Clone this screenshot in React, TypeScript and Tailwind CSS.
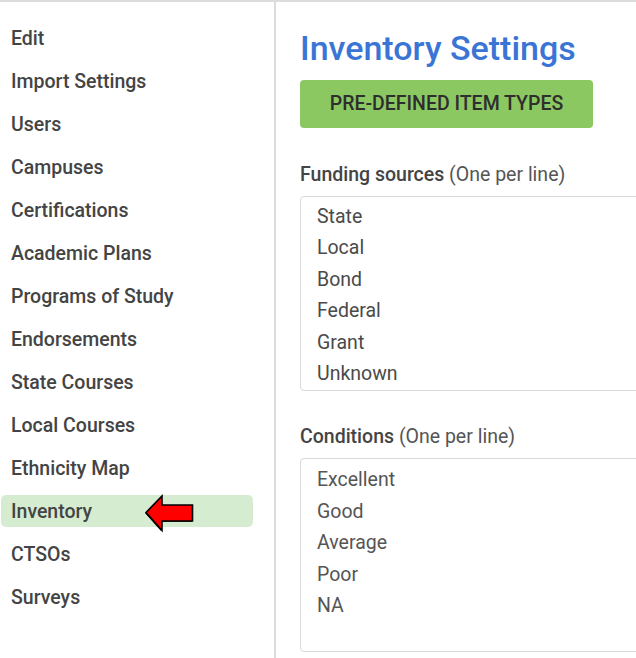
import React from "react";

const items = [
  "Edit",
  "Import Settings",
  "Users",
  "Campuses",
  "Certifications",
  "Academic Plans",
  "Programs of Study",
  "Endorsements",
  "State Courses",
  "Local Courses",
  "Ethnicity Map",
  "Inventory",
  "CTSOs",
  "Surveys",
];

const funding = ["State", "Local", "Bond", "Federal", "Grant", "Unknown"];
const conditions = ["Excellent", "Good", "Average", "Poor", "NA"];

function Arrow() {
  return (
    <svg
      className="absolute left-[142px] top-[-2px] overflow-visible"
      width="52"
      height="40"
      viewBox="0 0 52 40"
    >
      <polygon
        points="3,19.5 19,3 19,12 49.5,12 49.5,28 19,28 19,37.5"
        fill="#000"
        transform="translate(-0.8,0.8)"
      />
      <polygon
        points="3,19.5 19,3 19,12 49.5,12 49.5,28 19,28 19,37.5"
        fill="#ff0000"
        stroke="#000"
        strokeWidth="1.6"
        strokeLinejoin="miter"
      />
    </svg>
  );
}

export default function App() {
  return (
    <div
      className="w-[636px] h-[658px] overflow-hidden bg-white border-t-2 border-[#dcdcdc] flex"
      style={{ fontFamily: "Roboto, 'Noto Sans', sans-serif" }}
    >
      <div className="w-[276px] shrink-0 border-r-2 border-[#dcdcdc] pl-[1px] pr-[21px] pt-[20px] flex flex-col gap-[11px]">
        {items.map((it) => (
          <div
            key={it}
            className={
              "relative h-[32px] flex items-center pl-[10px] pt-[2px] rounded-[5px] text-[19.5px] font-medium text-[#444] whitespace-nowrap " +
              (it === "Inventory" ? "bg-[#d5ecd0]" : "")
            }
          >
            {it}
            {it === "Inventory" && <Arrow />}
          </div>
        ))}
      </div>
      <div className="flex-1 pl-[24px] flex flex-col min-w-0">
        <h1 className="mt-[28px] text-[34px] leading-[36px] text-[#3a75d6] font-medium whitespace-nowrap">
          Inventory Settings
        </h1>
        <div className="mt-[14px] w-[293px] h-[48px] shrink-0 rounded-[4px] bg-[#8bc862] flex items-center justify-center text-[19.5px] font-medium text-[#2e2e2e] whitespace-nowrap">
          PRE-DEFINED ITEM TYPES
        </div>
        <div className="mt-[35px] text-[19.5px] leading-[24px] text-[#444] whitespace-nowrap">
          <span className="font-medium">Funding sources</span>{" "}
          <span className="text-[#555]">(One per line)</span>
        </div>
        <div className="mt-[9px] w-[380px] h-[195px] shrink-0 border border-[#d9d9d9] rounded-[4px] pl-[16px] pt-[4px] text-[19.5px] leading-[31.4px] text-[#4a4a4a]">
          {funding.map((f) => (
            <div key={f}>{f}</div>
          ))}
        </div>
        <div className="mt-[34px] text-[19.5px] leading-[24px] text-[#444] whitespace-nowrap">
          <span className="font-medium">Conditions</span>{" "}
          <span className="text-[#555]">(One per line)</span>
        </div>
        <div className="mt-[9px] w-[380px] h-[194px] shrink-0 border border-[#d9d9d9] rounded-[4px] pl-[16px] pt-[5px] text-[19.5px] leading-[31.5px] text-[#555]">
          {conditions.map((f) => (
            <div key={f}>{f}</div>
          ))}
        </div>
      </div>
    </div>
  );
}
